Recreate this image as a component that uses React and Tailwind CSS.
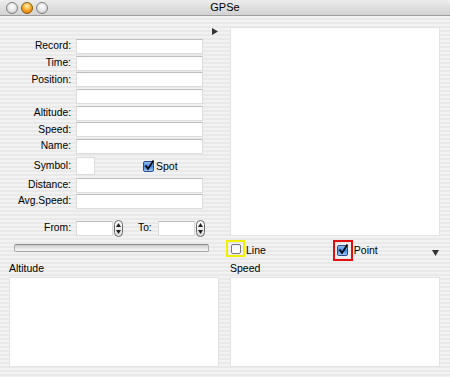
import React from 'react';

const font = { fontFamily: '"Liberation Sans", Arial, sans-serif' };

const stripes =
  'bg-[repeating-linear-gradient(180deg,#f2f2f2_0px,#f2f2f2_2px,#e9e9e9_2px,#e9e9e9_4px)]';

function Light({ active }) {
  return (
    <div
      className={
        active
          ? 'w-[12px] h-[12px] rounded-full border border-[#8a5a10] bg-[radial-gradient(circle_at_50%_30%,#fff3c0_0%,#f8b030_45%,#d86a00_100%)]'
          : 'w-[12px] h-[12px] rounded-full border border-[#7d7d7d] bg-[radial-gradient(circle_at_50%_35%,#ffffff_0%,#e6e6e6_50%,#bdbdbd_100%)]'
      }
    />
  );
}

function Field({ className = 'w-[127px]' }) {
  return <div className={`h-[15px] bg-white border border-[#dcdcdc] border-t-[#bdbdbd] ${className}`} />;
}

function Row({ label, children }) {
  return (
    <div className="flex items-center h-[15px]">
      <div className="w-[72px] pr-[1px] text-right text-[10.3px] text-black leading-none">{label}</div>
      <div className="ml-[4px] flex items-center">{children}</div>
    </div>
  );
}

function Stepper() {
  return (
    <div className="w-[9px] h-[17px] rounded-[5px] border border-[#6a6a6a] bg-gradient-to-b from-white to-[#dcdcdc] flex flex-col items-center justify-between py-[2px]">
      <svg width="5" height="4" viewBox="0 0 5 4"><path d="M2.5 0L5 4H0z" fill="#222" /></svg>
      <svg width="5" height="4" viewBox="0 0 5 4"><path d="M0 0h5L2.5 4z" fill="#222" /></svg>
    </div>
  );
}

function Check({ checked }) {
  if (!checked) {
    return (
      <div className="w-[10px] h-[10px] rounded-[2px] border border-[#7a7a7a] bg-gradient-to-b from-[#f4f4f4] to-white" />
    );
  }
  return (
    <svg width="12" height="12" viewBox="0 0 12 12">
      <defs>
        <linearGradient id="cb" x1="0" y1="0" x2="0" y2="1">
          <stop offset="0" stopColor="#9cc3f2" />
          <stop offset="0.5" stopColor="#3f86df" />
          <stop offset="1" stopColor="#a9d0fa" />
        </linearGradient>
      </defs>
      <rect x="0.5" y="1.5" width="10" height="10" rx="1.5" fill="url(#cb)" stroke="#2d4f86" />
      <path d="M2.5 5.5L5 9L10.5 0.5" fill="none" stroke="#0a0a0a" strokeWidth="1.8" />
    </svg>
  );
}

export default function App() {
  return (
    <div className={`w-[450px] h-[377px] overflow-hidden flex flex-col ${stripes}`} style={font}>
      {/* title bar */}
      <div className="relative h-[16px] flex items-center border-b border-[#9d9d9d] bg-gradient-to-b from-[#ececec] to-[#d2d2d2] rounded-t-[5px]">
        <div className="flex items-center gap-[3px] pl-[6px]">
          <Light />
          <Light active />
          <Light />
        </div>
        <div className="absolute inset-0 flex items-center justify-center text-[11px] text-black">GPSe</div>
      </div>

      {/* upper area */}
      <div className="grid grid-cols-[222px_1fr]">
        <div className="flex flex-col">
          <div className="flex justify-end pr-[4px] mt-[12px]">
            <svg width="6" height="7" viewBox="0 0 6 7"><path d="M0 0L6 3.5L0 7z" fill="#333" /></svg>
          </div>
          <div className="flex flex-col gap-[1.67px] mt-[4px]">
            <Row label="Record:"><Field /></Row>
            <Row label="Time:"><Field /></Row>
            <Row label="Position:"><Field /></Row>
            <Row label=""><Field /></Row>
            <Row label="Altitude:"><Field /></Row>
            <Row label="Speed:"><Field /></Row>
            <Row label="Name:"><Field /></Row>
          </div>
          <div className="flex items-center h-[18px] mt-[3px]">
            <div className="w-[72px] pr-[1px] text-right text-[10.3px] leading-none">Symbol:</div>
            <div className="ml-[4px] w-[19px] h-[18px] bg-white border border-[#dcdcdc]" />
            <div className="ml-[48px] flex items-center gap-[1px] mt-[1px]">
              <Check checked />
              <span className="text-[10.5px] leading-none">Spot</span>
            </div>
          </div>
          <div className="flex flex-col gap-[1px] mt-[3px]">
            <Row label="Distance:"><Field /></Row>
            <Row label="Avg.Speed:"><Field /></Row>
          </div>
          <div className="flex items-center h-[17px] mt-[11px]">
            <div className="w-[72px] pr-[1px] text-right text-[10.3px] leading-none">From:</div>
            <div className="ml-[4px]"><Field className="w-[37px]" /></div>
            <div className="ml-[1px]"><Stepper /></div>
            <div className="ml-[15px] text-[10.3px] leading-none">To:</div>
            <div className="ml-[6px]"><Field className="w-[37px]" /></div>
            <div className="ml-[1px]"><Stepper /></div>
          </div>
          <div className="ml-[14px] mr-[13px] mt-[7px] h-[8px] rounded-[2px] border border-[#a8a8a8] border-t-[#8c8c8c] bg-gradient-to-b from-[#c8c8c8] via-[#e6e6e6] to-[#f6f6f6]" />
        </div>

        <div className="flex flex-col">
          <div className="ml-[8px] mt-[11px] w-[210px] h-[209px] bg-white border border-[#e4e4e4]" />
          <div className="flex items-center h-[22px] mt-[3px]">
            <div className="ml-[4px] -mt-[3px] w-[19px] h-[17px] border-2 border-[#f0f000] flex items-center justify-center">
              <Check />
            </div>
            <span className="ml-[1px] text-[10.5px] leading-none">Line</span>
            <div className="ml-[67px] w-[20px] h-[21px] border-2 border-[#e01010] flex items-center justify-center">
              <Check checked />
            </div>
            <span className="ml-[1px] text-[10.5px] leading-none">Point</span>
            <div className="ml-auto mr-[11px] mt-[6px]">
              <svg width="7" height="6" viewBox="0 0 7 6"><path d="M0 0H7L3.5 6z" fill="#333" /></svg>
            </div>
          </div>
        </div>
      </div>

      {/* lower area */}
      <div className="grid grid-cols-[222px_1fr]">
        <div className="flex flex-col pl-[9px]">
          <div className="h-[15px] text-[10.5px] leading-none flex items-end pb-[3px]">Altitude</div>
          <div className="mt-[1px] w-[210px] h-[90px] bg-white border border-[#e4e4e4]" />
        </div>
        <div className="flex flex-col pl-[8px]">
          <div className="h-[15px] text-[10.5px] leading-none flex items-end pb-[3px]">Speed</div>
          <div className="mt-[1px] w-[210px] h-[90px] bg-white border border-[#e4e4e4]" />
        </div>
      </div>
    </div>
  );
}
